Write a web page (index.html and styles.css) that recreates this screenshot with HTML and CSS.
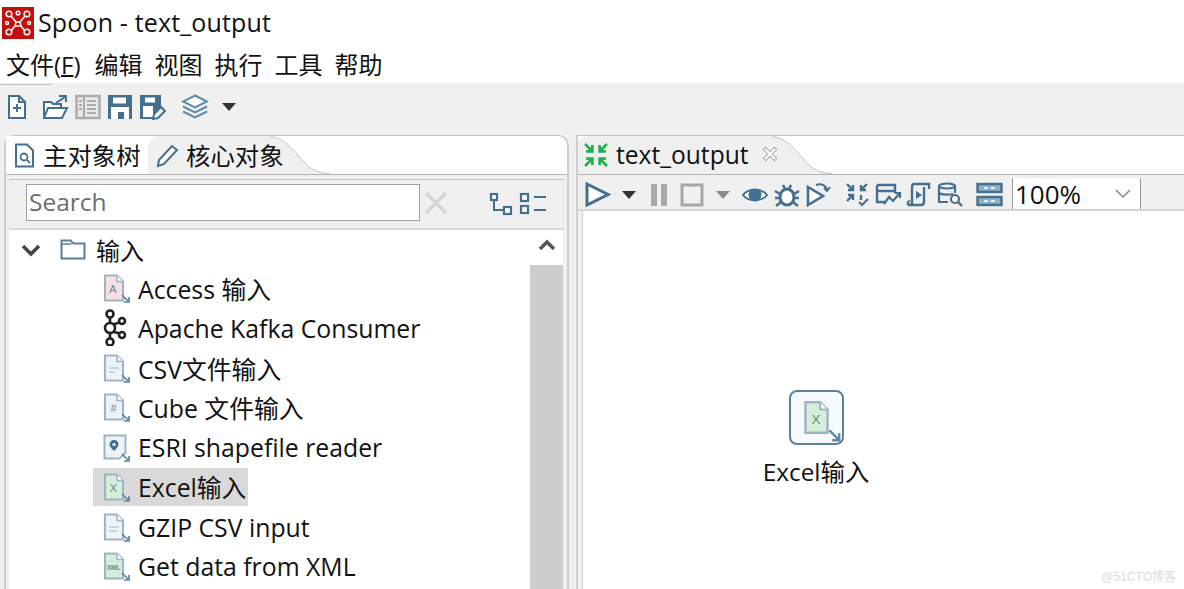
FILE: index.html
```html
<!DOCTYPE html>
<html lang="zh">
<head>
<meta charset="utf-8">
<title>Spoon - text_output</title>
<link rel="stylesheet" href="styles.css">
</head>
<body>
<svg class="defs" width="0" height="0" aria-hidden="true">
  <symbol id="arrow" viewBox="0 0 10 10"><path d="M1 1 8 8M8 3v5H3" fill="none" stroke="#5d88a3" stroke-width="1.7"/></symbol>
  <symbol id="doc" viewBox="0 0 22 28"><path d="M2 1.500h12l6 6v19H2z" fill="var(--fill,#eef3f8)" stroke="#9db4c6" stroke-width="2"/><path d="M14 1.500v6h6" fill="#fff" stroke="#9db4c6" stroke-width="1.500"/></symbol>
</svg>

<header class="title">
  <svg class="logo" viewBox="0 0 32 32"><rect width="32" height="32" fill="#c50f0f"/><g fill="none" stroke="#fff" stroke-width="1.500"><path d="M9 9l5 6M23 9l-5 6M14 15h5M13 19l-4 5M19 19l4 5M14 15l-1 4h6l-1-4"/><circle cx="7" cy="7" r="2.800"/><circle cx="16" cy="6" r="1.800"/><circle cx="25" cy="7" r="2.800"/><circle cx="7" cy="25" r="2.800"/><circle cx="25" cy="25" r="2.800"/><circle cx="5" cy="16" r="1.500"/><circle cx="27" cy="16" r="1.500"/></g></svg>
  <span>Spoon - text_output</span>
</header>

<nav class="menu"><span class="menu-first">文件(<u>F</u>)</span><span>编辑</span><span>视图</span><span>执行</span><span>工具</span><span>帮助</span></nav>

<div class="toolbar">
  <svg class="t1" width="20" height="26" viewBox="0 0 20 26"><path d="M2 2h10l6 6v16H2z" fill="#fff" stroke="#44708f" stroke-width="2"/><path d="M12 2v6h6" fill="none" stroke="#44708f" stroke-width="2"/><path d="M6 14h8M10 10v8" stroke="#44708f" stroke-width="2"/></svg>
  <svg class="t2" width="27" height="26" viewBox="0 0 27 26"><path d="M2 24V8h7l2 2h8v4M2 24l4-10h19l-5 10z" fill="#fff" stroke="#44708f" stroke-width="2"/><path d="M14 9l9-6M17 2h7v6" fill="none" stroke="#44708f" stroke-width="2"/></svg>
  <svg class="t3" width="26" height="26" viewBox="0 0 26 26"><rect x="1.500" y="2" width="23" height="22" fill="#e8e8e8" stroke="#ababab" stroke-width="2.500"/><path d="M9 2v22M12 7h9M12 11h9M12 15h9M12 19h9M4 7h3M4 11h3M4 15h3" stroke="#ababab" stroke-width="2"/></svg>
  <svg class="t4" width="26" height="26" viewBox="0 0 26 26"><rect x="1" y="1" width="24" height="24" fill="#44708f"/><rect x="6" y="3.500" width="13" height="6" fill="#fff"/><rect x="4" y="13" width="18" height="12" fill="#fff"/><rect x="11" y="18" width="6" height="7" fill="#44708f"/></svg>
  <svg class="t5" width="27" height="27" viewBox="0 0 27 27"><path d="M1 1h21v11l-9 13H1z" fill="#44708f"/><rect x="6" y="3.500" width="10" height="5" fill="#fff"/><rect x="4" y="12" width="10" height="11" fill="#fff"/><path d="M14 25l1-5 7-7 4 4-7 7z" fill="#f0f0f0" stroke="#44708f" stroke-width="2"/></svg>
  <svg class="t6" width="28" height="26" viewBox="0 0 28 26"><path d="M14 1.500 26 7.500 14 13.500 2 7.500z" fill="#fff" stroke="#5a8aa8" stroke-width="2"/><path d="M2 12.500l12 6 12-6M2 17.500l12 6 12-6" fill="none" stroke="#5a8aa8" stroke-width="2"/></svg>
  <i class="caret t7"></i>
</div>

<main class="workspace">
  <section class="pane left">
    <div class="tabs">
      <div class="tab active">
        <svg width="21" height="25" viewBox="0 0 21 25"><path d="M2 1.500h11l6 6v16H2z" fill="#fff" stroke="#44708f" stroke-width="2"/><circle cx="10" cy="14" r="3.500" fill="none" stroke="#44708f" stroke-width="1.800"/><path d="M13 17l3 3" stroke="#44708f" stroke-width="1.800"/></svg>
        <span>主对象树</span>
      </div>
      <div class="tab inactive">
        <svg width="23" height="25" viewBox="0 0 23 25"><path d="M2 23l1-6L16 3l5 4L8 21z" fill="#fff" stroke="#44708f" stroke-width="2"/></svg>
        <span class="tab-label">核心对象</span>
        <svg class="curve" width="60" height="38" viewBox="0 0 60 38"><path d="M0 0C14 2 22 12 32 24 42 35 48 37 60 37V38H0z" fill="#f0f0f0"/><path d="M0 .5C14 2 22 12 32 24 42 35 48 37 60 37.500" fill="none" stroke="#c4c4c4"/></svg>
      </div>
    </div>
    <div class="search-row">
      <div class="search">Search</div>
      <svg class="clear" width="26" height="26" viewBox="0 0 26 26"><path d="M3 3l20 20M23 3 3 23" stroke="#d4d4d4" stroke-width="3.500"/></svg>
      <svg class="tree-a" width="24" height="24" viewBox="0 0 24 24"><g fill="#fff" stroke="#44708f" stroke-width="2.200"><rect x="2" y="2" width="6" height="6"/><rect x="15" y="15" width="7" height="7"/></g><path d="M5 8v10h10" fill="none" stroke="#44708f" stroke-width="2"/></svg>
      <svg class="tree-b" width="28" height="24" viewBox="0 0 28 24"><g fill="#fff" stroke="#44708f" stroke-width="2.200"><rect x="2" y="2" width="7" height="7"/><rect x="2" y="14" width="7" height="7"/></g><path d="M15 5h12M15 18h12" stroke="#44708f" stroke-width="2"/></svg>
    </div>
    <div class="tree-wrap">
      <ul class="tree">
        <li class="row folder">
          <svg class="chev" width="22" height="14" viewBox="0 0 22 14"><path d="M3 3l8 8 8-8" fill="none" stroke="#444" stroke-width="3.500"/></svg>
          <svg class="folder-i" width="26" height="21" viewBox="0 0 26 21"><path d="M1.500 19.500V1.500h9l3 3h11v15z" fill="#fff" stroke="#5a7f99" stroke-width="2"/><path d="M1.500 5h10" stroke="#5a7f99" stroke-width="1.500"/></svg>
          <span>输入</span>
        </li>
        <li class="row item"><span class="ic"><svg class="pink" width="22" height="28" viewBox="0 0 22 28"><use href="#doc"/><text x="10" y="19" class="g">A</text></svg><svg class="ar" width="10" height="10"><use href="#arrow"/></svg></span><span>Access 输入</span></li>
        <li class="row item"><span class="ic"><svg width="24" height="37" viewBox="0 0 24 37" class="kafka"><g fill="none" stroke="#222" stroke-width="2.600"><path d="M7 7v24M7 16l12-3M7 22l12 3"/><circle cx="7" cy="5" r="3.500" fill="#fff"/><circle cx="7" cy="19" r="5" fill="#fff"/><circle cx="7" cy="33" r="3.500" fill="#fff"/><circle cx="19" cy="12" r="3" fill="#fff"/><circle cx="19" cy="26" r="3" fill="#fff"/></g></svg></span><span>Apache Kafka Consumer</span></li>
        <li class="row item"><span class="ic"><svg width="22" height="28" viewBox="0 0 22 28"><use href="#doc"/><path d="M6 13h10v2H6zM6 17h6v2H6z" fill="#c9d6e0"/></svg><svg class="ar" width="10" height="10"><use href="#arrow"/></svg></span><span>CSV文件输入</span></li>
        <li class="row item"><span class="ic"><svg width="22" height="28" viewBox="0 0 22 28"><use href="#doc"/><text x="10.500" y="19" class="g">#</text></svg><svg class="ar" width="10" height="10"><use href="#arrow"/></svg></span><span>Cube 文件输入</span></li>
        <li class="row item"><span class="ic"><svg width="24" height="26" viewBox="0 0 24 26"><path d="M1.500 1.500h21v17l-6 6H1.500z" fill="#eef3f8" stroke="#9db4c6" stroke-width="2"/><path d="M11 6a4.500 4.500 0 0 1 4.500 4.500C15.500 13 11 17 11 17s-4.500-4-4.500-6.500A4.500 4.500 0 0 1 11 6z" fill="#44708f"/><circle cx="11" cy="10.500" r="1.600" fill="#fff"/></svg><svg class="ar" width="10" height="10"><use href="#arrow"/></svg></span><span>ESRI shapefile reader</span></li>
        <li class="row item selected"><span class="ic"><svg class="green" width="22" height="28" viewBox="0 0 22 28"><use href="#doc"/><text x="10.500" y="19" class="g">X</text></svg><svg class="ar" width="10" height="10"><use href="#arrow"/></svg></span><span class="sel-text">Excel输入</span></li>
        <li class="row item"><span class="ic"><svg width="22" height="28" viewBox="0 0 22 28"><use href="#doc"/><path d="M6 13h10v2H6zM6 17h8v2H6z" fill="#c9d6e0"/></svg><svg class="ar" width="10" height="10"><use href="#arrow"/></svg></span><span>GZIP CSV input</span></li>
        <li class="row item"><span class="ic"><svg class="green" width="22" height="28" viewBox="0 0 22 28"><use href="#doc"/><text x="10.500" y="18" class="g xml">XML</text></svg><svg class="ar" width="10" height="10"><use href="#arrow"/></svg></span><span>Get data from XML</span></li>
      </ul>
      <div class="scrollbar">
        <div class="scroll-up"><svg width="18" height="12" viewBox="0 0 18 12"><path d="M2 10l7-7 7 7" fill="none" stroke="#555" stroke-width="3.500"/></svg></div>
        <div class="scroll-thumb"></div>
      </div>
    </div>
  </section>

  <section class="pane right">
    <div class="tabs">
      <div class="tab job">
        <svg width="26" height="26" viewBox="0 0 25 25"><g fill="none" stroke="#1fb04c" stroke-width="2.600"><path d="M2 2l7 7M9 3v6H3M23 2l-7 7M16 3v6h6M2 23l7-7M9 22v-6H3M23 23l-7-7M16 22v-6h6"/></g></svg>
        <span class="job-label">text_output</span>
        <svg class="close" width="18" height="18" viewBox="0 0 16 16"><path d="M2 4l2-2 4 4 4-4 2 2-4 4 4 4-2 2-4-4-4 4-2-2 4-4z" fill="#fff" stroke="#b5b5b5"/></svg>
        <svg class="curve" width="60" height="38" viewBox="0 0 60 38"><path d="M0 0C14 2 22 12 32 24 42 35 48 37 60 37V38H0z" fill="#f0f0f0"/><path d="M0 .5C14 2 22 12 32 24 42 35 48 37 60 37.500" fill="none" stroke="#c4c4c4"/></svg>
      </div>
    </div>
    <div class="job-bar">
      <svg width="26" height="25" viewBox="0 0 26 25"><path d="M2 2l21 10.500L2 23z" fill="#fff" stroke="#44708f" stroke-width="3"/></svg>
      <i class="caret c1"></i>
      <svg class="b1" width="18" height="24" viewBox="0 0 18 24"><path d="M1 1h6v22H1zM11 1h6v22h-6z" fill="#a8a8a8"/></svg>
      <svg class="b2" width="24" height="24" viewBox="0 0 24 24"><rect x="2" y="2" width="20" height="20" fill="#f0f0f0" stroke="#a8a8a8" stroke-width="3"/></svg>
      <i class="caret grey c2"></i>
      <svg class="b3" width="26" height="18" viewBox="0 0 26 18"><path d="M1 9C6 2 20 2 25 9 20 16 6 16 1 9z" fill="#fff" stroke="#44708f" stroke-width="2"/><circle cx="13" cy="9" r="6.500" fill="#44708f"/></svg>
      <svg class="b4" width="26" height="26" viewBox="0 0 26 26"><ellipse cx="13" cy="15" rx="7" ry="8" fill="#fff" stroke="#44708f" stroke-width="3"/><path d="M9 3l2 4M17 3l-2 4M1 9l5 3M25 9l-5 3M1 16h4M25 16h-4M2 24l5-4M24 24l-5-4" stroke="#44708f" stroke-width="2.600"/></svg>
      <svg class="b5" width="25" height="25" viewBox="0 0 25 25"><path d="M2 5l15 9L2 23z" fill="#fff" stroke="#44708f" stroke-width="2.600"/><path d="M10 3c5-2 10 0 11 5M24 5l-3 4-3-3" fill="none" stroke="#44708f" stroke-width="2"/></svg>
      <svg class="b6" width="24" height="25" viewBox="0 0 24 25"><path d="M2 2l6 6M8 3v5H3M22 2l-6 6M16 3v5h5M2 19l6-6M8 18v-5H3M16 13v5" fill="none" stroke="#44708f" stroke-width="2.400"/><path d="M14 20l3 3 6-6" fill="none" stroke="#44708f" stroke-width="2"/></svg>
      <svg class="b7" width="28" height="25" viewBox="0 0 28 25"><path d="M2 3h18v8M2 3v17h9M2 9h18" fill="none" stroke="#44708f" stroke-width="2.400"/><path d="M9 22l5-7 4 4 6-7M20 11h5v5" fill="none" stroke="#44708f" stroke-width="2.200"/></svg>
      <svg class="b8" width="25" height="25" viewBox="0 0 25 25"><path d="M8 2h15v5M8 2c-2 0-2 2-2 4v15c0 2-2 2-4 2h13c2 0 3-1 3-3V5" fill="none" stroke="#44708f" stroke-width="2.400"/><path d="M10 9l6 4-6 4z" fill="#44708f"/><path d="M2 23c-1-2 0-4 2-4" fill="none" stroke="#44708f" stroke-width="2"/></svg>
      <svg class="b9" width="27" height="25" viewBox="0 0 27 25"><ellipse cx="10" cy="4" rx="8" ry="2.500" fill="none" stroke="#44708f" stroke-width="2.200"/><path d="M2 4v16h9M18 4v7M2 11c3 2 10 2 14 1" fill="none" stroke="#44708f" stroke-width="2.200"/><circle cx="18" cy="17" r="4" fill="#fff" stroke="#44708f" stroke-width="2.200"/><path d="M21 20l4 4" stroke="#44708f" stroke-width="2.400"/></svg>
      <svg class="b10" width="27" height="25" viewBox="0 0 27 25"><g fill="#8fb0c6" stroke="#44708f" stroke-width="2.400"><rect x="1.500" y="2" width="24" height="8"/><rect x="1.500" y="15" width="24" height="8"/></g><path d="M8 6h4M15 6h4M8 19h4M15 19h4" stroke="#fff" stroke-width="1.500"/></svg>
      <div class="zoom-box"><span>100%</span><svg width="16" height="10" viewBox="0 0 16 10"><path d="M1 1l7 7 7-7" fill="none" stroke="#888" stroke-width="1.500"/></svg></div>
    </div>
    <div class="canvas">
      <div class="node">
        <div class="node-box"><svg class="green" width="27" height="35" viewBox="0 0 22 28"><use href="#doc"/><text x="10.500" y="19" class="g">X</text></svg><svg class="node-ar" width="14" height="14"><use href="#arrow"/></svg></div>
        <span>Excel输入</span>
      </div>
      <div class="mark">@51CTO博客</div>
    </div>
  </section>
</main>
</body>
</html>
```
FILE: styles.css
```css
* { box-sizing: border-box; }
html, body { margin: 0; padding: 0; }
body {
  width: 1184px;
  height: 589px;
  overflow: hidden;
  background: #fff;
  color: #111;
  font-family: "Open Sans", "Noto Sans CJK SC", sans-serif;
  font-size: 25px;
  display: flex;
  flex-direction: column;
}
.defs { position: absolute; }
svg { display: block; flex: none; }

.title { height: 42px; display: flex; align-items: center; gap: 4px; padding: 3px 0 0 2px; flex: none; }
.logo { width: 32px; height: 32px; }
.title span { letter-spacing: .15px; margin-top: -2px; }

.menu { height: 41px; display: flex; gap: 12px; padding: 5px 0 0 6px; align-items: center; flex: none; font-size: 24px; }
.menu span { line-height: 1; }
.menu .menu-first { margin-right: 2px; }
.menu u { text-underline-offset: 1px; }

.toolbar {
  height: 47px;
  flex: none;
  background: #f0f0f0;
  display: flex;
  align-items: center;
  padding: 1px 0 0 7px;
  position: relative;
}
.toolbar::before { content: ""; position: absolute; left: 0; top: 1px; width: 52px; height: 1px; background: #c4c4c4; }
.t2 { margin-left: 15px; }
.t3 { margin-left: 6px; }
.t4 { margin-left: 6px; }
.t5 { margin-left: 6px; }
.t6 { margin-left: 15px; }
.t7 { margin-left: 13px; }
.caret { display: block; flex: none; width: 0; height: 0; border: 7.500px solid transparent; border-bottom: 0; border-top: 8px solid #333; }
.caret.grey { border-top-color: #8a8a8a; }

.workspace { flex: 1; background: #f0f0f0; display: flex; padding: 5px 0 0 4px; min-height: 0; }
.pane { display: flex; flex-direction: column; min-height: 0; border-top: 1px solid #c4c4c4; }
.left { width: 565px; border-right: 2px solid #cfcfcf; border-left: 2px solid #cfcfcf; padding-left: 3px; border-top-right-radius: 10px; border-top-left-radius: 10px; background: #f0f0f0; }
.right { flex: 1; margin-left: 7px; border-left: 2px solid #cfcfcf; }

.tabs { height: 39px; display: flex; background: #fff; flex: none; border-bottom: 1px solid #b5b5b5; margin-left: -3px; border-top-right-radius: 10px; }
.tab { display: flex; align-items: center; position: relative; }
.tab span, .tab > svg:not(.curve) { position: relative; z-index: 1; }
.tab span { font-size: 24.4px; margin-top: -1px; }
.tab.active { width: 142px; background: #fff; padding-left: 8px; gap: 8px; }
.tab.inactive { background: #f0f0f0; width: 122px; padding-left: 8px; gap: 7px; border-top-left-radius: 12px; white-space: nowrap; }
.tab .curve { position: absolute; left: 100%; top: 0; z-index: 0; }
.job { width: 194px; background: #f0f0f0; padding-left: 5px; gap: 7px; border-top-left-radius: 8px; white-space: nowrap; }
.tab .job-label { font-size: 24.6px; }
.job .close { margin-left: 5px; margin-top: -2px; }
.right .tabs { margin-left: 0; border-top-right-radius: 0; }

.search-row { height: 51px; flex: none; display: flex; align-items: center; border-top: 1px solid #c4c4c4; margin-top: 4px; border-bottom: 2px solid #d9d9d9; margin-right: 3px; padding: 0 0 3px 17px; }
.search { width: 394px; height: 37px; background: #fff; border: 1px solid #a0a0a0; color: #6d6d6d; font-size: 24.5px; line-height: 33px; padding-left: 2px; }
.clear { margin-left: 3px; }
.tree-a { margin-left: 40px; margin-top: 3px; }
.tree-b { margin-left: 6px; margin-top: 3px; }

.tree-wrap { flex: 1; display: flex; min-height: 0; margin-right: 4px; }
.tree { list-style: none; margin: 0; padding: 0; flex: 1; background: #fff; overflow: hidden; }
.row { height: 39.750px; display: flex; align-items: center; white-space: nowrap; font-size: 24.800px; }
.chev { margin-left: 11px; }
.folder-i { margin-left: 18px; }
.folder span { margin-left: 10px; font-size: 24px; }
.item { padding: 0 0 3px 84px; }
.ic { width: 45px; height: 38px; flex: none; display: flex; align-items: center; padding-left: 10px; position: relative; }
.ar { position: absolute; left: 28px; top: 25px; }
.selected .ic, .sel-text { background: #d9d9d9; height: 38px; line-height: 38px; }
.sel-text { padding-right: 2px; }
.pink { --fill: #f7dfe3; }
.green { --fill: #d5eeda; }
.g { font-size: 11px; fill: #6d8494; text-anchor: middle; font-family: "Liberation Sans", sans-serif; }
.g.xml { font-size: 6.500px; font-weight: 700; }

.scrollbar { width: 33px; flex: none; display: flex; flex-direction: column; }
.scroll-up { height: 35px; background: #fff; display: flex; justify-content: center; padding-top: 9px; }
.scroll-thumb { flex: 1; background: #cdcdcd; }

.job-bar { height: 36px; flex: none; display: flex; align-items: center; padding: 5px 0 0 7px; border-bottom: 2px solid #d4d4d4; }
.c1 { margin-left: 11px; }
.b1 { margin-left: 14px; }
.b2 { margin-left: 12px; }
.c2 { margin-left: 12px; }
.b3 { margin-left: 12px; }
.b4 { margin-left: 6px; }
.b5 { margin-left: 6px; }
.b6 { margin-left: 14px; }
.b7 { margin-left: 6px; }
.b8 { margin-left: 3px; }
.b9 { margin-left: 6px; }
.b10 { margin-left: 12px; }
.zoom-box { margin-left: 9px; width: 129px; height: 31px; background: #fff; border-left: 1px solid #999; border-right: 1px solid #999; display: flex; align-items: center; justify-content: space-between; padding: 0 9px 0 2px; align-self: flex-end; font-size: 26px; }

.canvas { flex: 1; background: #fff; margin-left: 4px; border-left: 1px solid #cfcfcf; position: relative; min-height: 0; }
.node { position: absolute; left: 178px; top: 179px; width: 110px; display: flex; flex-direction: column; align-items: center; gap: 8px; font-size: 24.4px; white-space: nowrap; }
.node-box { width: 55px; height: 55px; background: #f7fafc; border: 2px solid #5d8296; border-radius: 8px; display: flex; align-items: center; padding-left: 12px; position: relative; }
.node-ar { position: absolute; right: 0; bottom: 0; }
.mark { position: absolute; right: 8px; bottom: 5px; font-size: 12px; color: #dcdcdc; font-family: "Liberation Sans", "Noto Sans CJK SC", sans-serif; }
```
